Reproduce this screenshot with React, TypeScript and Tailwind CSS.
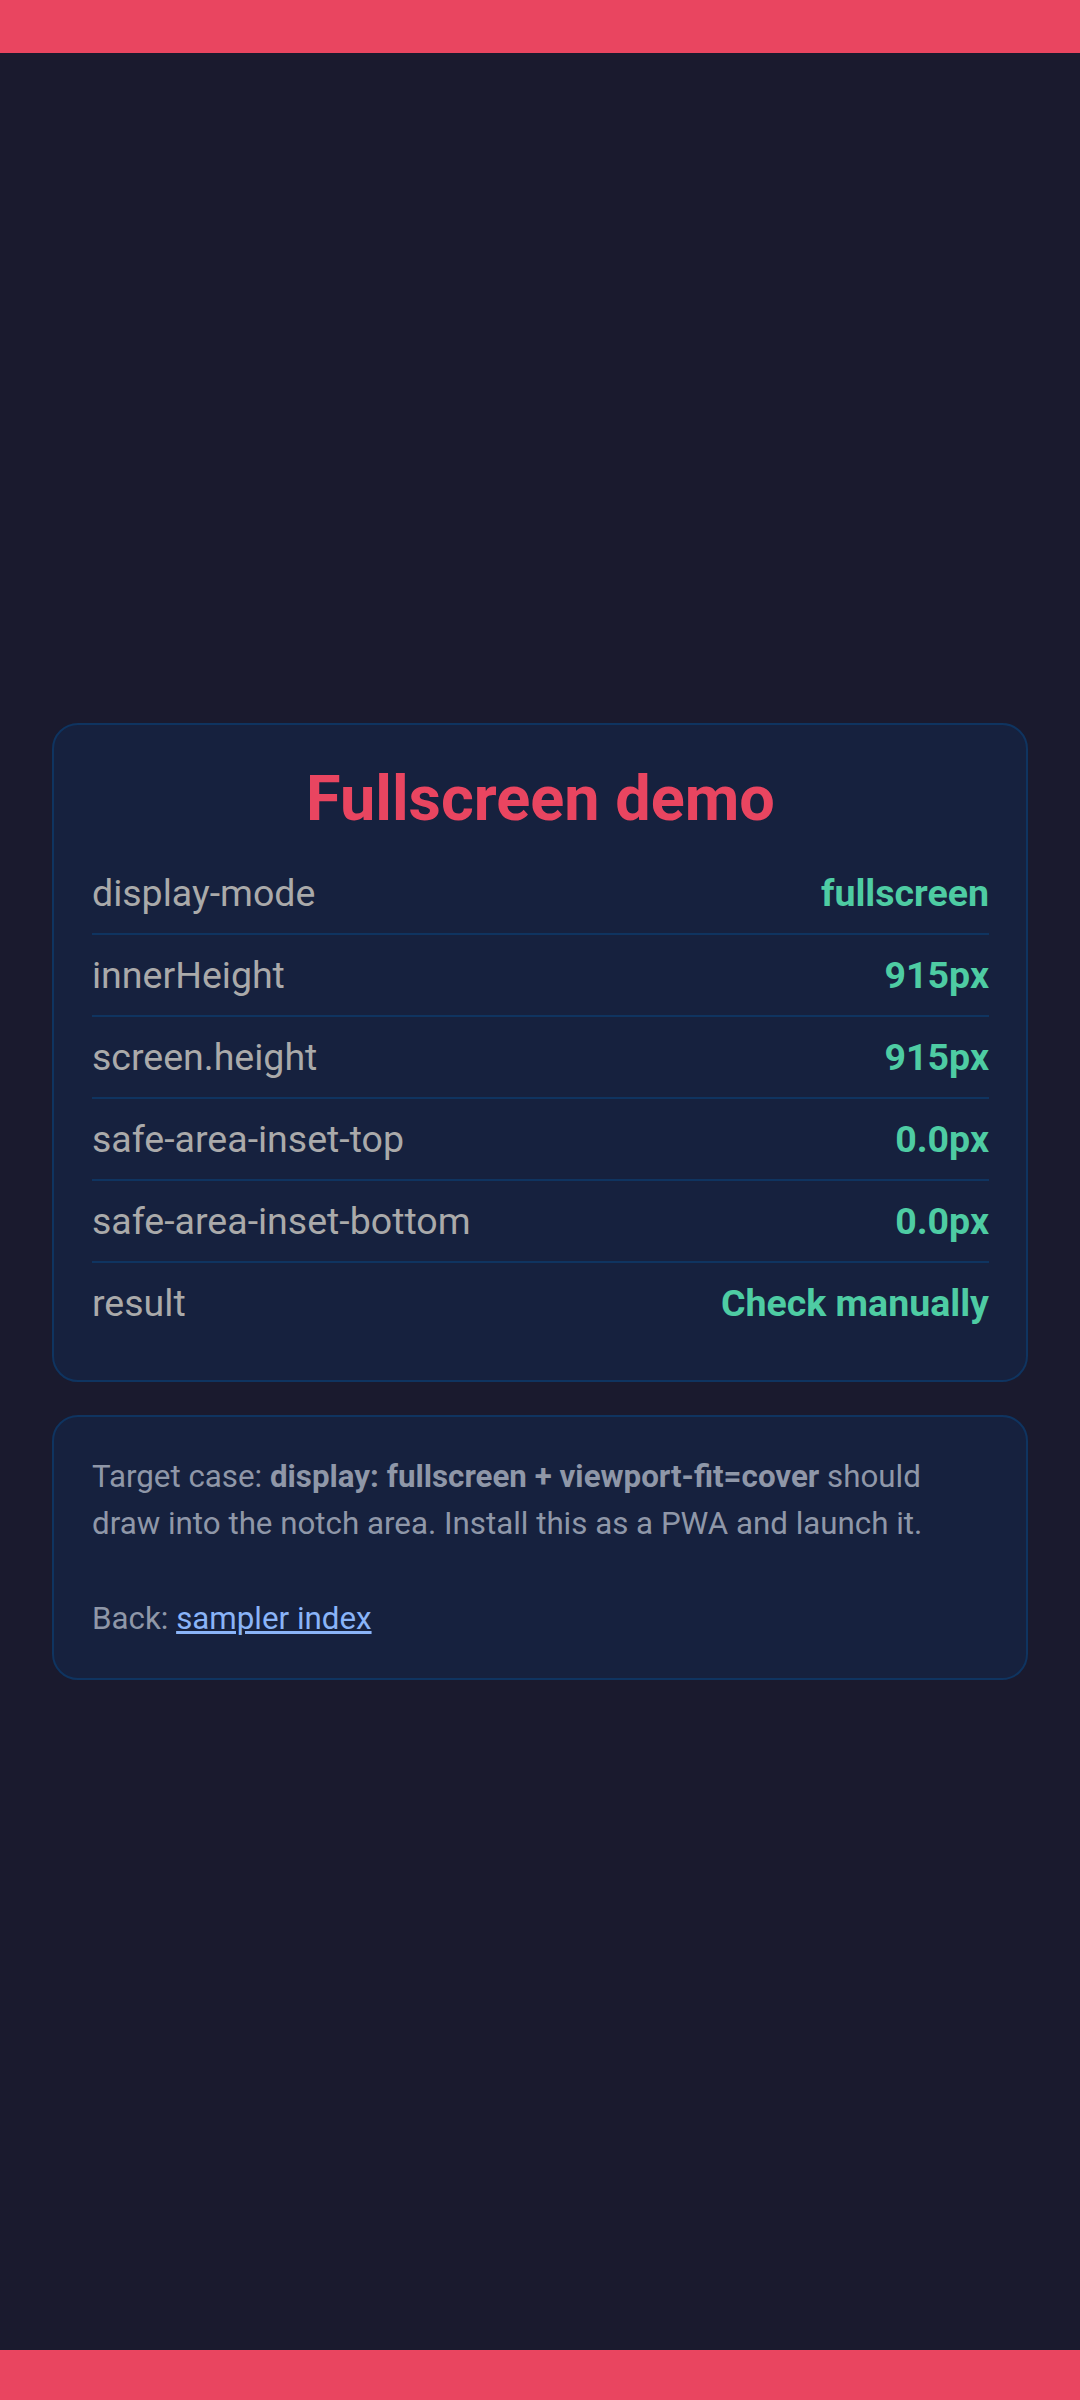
import React from 'react';

const rows: [string, string][] = [
  ['display-mode', 'fullscreen'],
  ['innerHeight', '915px'],
  ['screen.height', '915px'],
  ['safe-area-inset-top', '0.0px'],
  ['safe-area-inset-bottom', '0.0px'],
  ['result', 'Check manually'],
];

export default function App() {
  return (
    <div
      className="flex min-h-[2400px] flex-col bg-[#1a1a2e]"
      style={{ fontFamily: 'Roboto, "Noto Sans", sans-serif' }}
    >
      <div className="h-[53px] shrink-0 bg-[#e94560]" />

      <main className="flex flex-1 flex-col justify-center gap-[33px] px-[52px]">
        <section className="rounded-[26px] border-2 border-[#0f3460] bg-[#16213e] pt-[37px] pr-[37px] pb-[37px] pl-[38px]">
          <h1 className="mb-[17px] text-center text-[63px] leading-[74px] font-bold text-[#e94560]">
            Fullscreen demo
          </h1>
          <div className="flex flex-col">
            {rows.map(([label, value], i) => (
              <div
                key={label}
                className={
                  i < rows.length - 1
                    ? 'flex items-center justify-between border-b-2 border-[#0f3460] py-[18px] text-[37.5px] leading-[44px]'
                    : 'flex items-center justify-between py-[18px] text-[37.5px] leading-[44px]'
                }
              >
                <span className="text-[#aaaaaa]">{label}</span>
                <span className="font-bold text-[#4ecca3]">{value}</span>
              </div>
            ))}
          </div>
        </section>

        <section className="rounded-[26px] border-2 border-[#0f3460] bg-[#16213e] pt-[36px] pr-[37px] pb-[36px] pl-[38px] text-[31.3px] leading-[47.3px] text-[#8f97a8]">
          <p>
            Target case: <strong className="font-bold">display: fullscreen + viewport-fit=cover</strong> should
            draw into the notch area. Install this as a PWA and launch it.
          </p>
          <p className="mt-[47.3px]">
            Back:{' '}
            <a href="#" className="text-[#8ab4f8] underline">
              sampler index
            </a>
          </p>
        </section>
      </main>

      <div className="h-[50px] shrink-0 bg-[#e94560]" />
    </div>
  );
}
